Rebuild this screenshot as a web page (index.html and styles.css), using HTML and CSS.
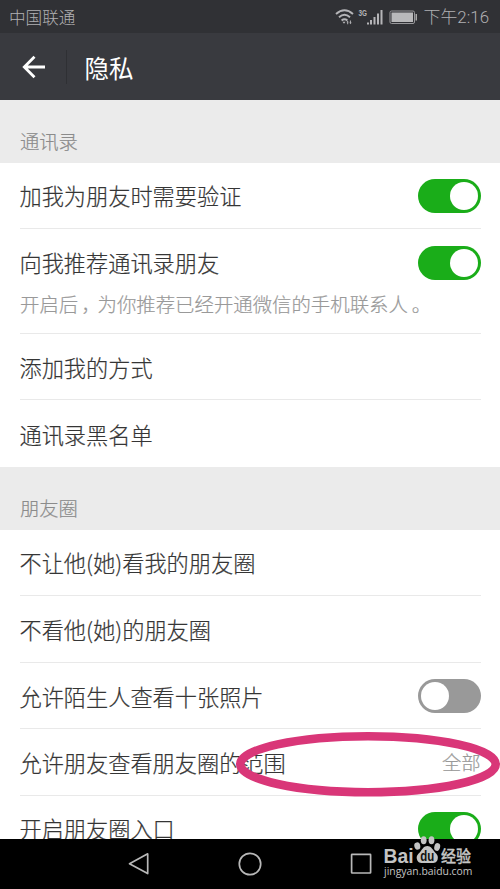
FILE: index.html
```html
<!DOCTYPE html>
<html lang="zh-CN">
<head>
<meta charset="utf-8">
<title>隐私</title>
<link rel="stylesheet" href="styles.css">
</head>
<body>
<div class="phone">
  <div class="status">
    <span>中国联通</span>
    <div class="status-right">
      <svg class="signals" width="86" height="20" viewBox="0 0 86 20">
        <g fill="none" stroke="#b5b5b8" stroke-width="1.900">
          <path d="M2 7Q10.500-.5 19 7M5 10.300Q10.500 5.400 16 10.300M7.600 13.400Q10.500 11 13.400 13.400"/>
        </g>
        <path d="M8.500 14.700h3l-1.500 2.100zM13.600 13.700l-1.200 1.500h.8v2h1v-2h.6zM16.500 17.200l1.200-1.600h-.8v-2h-1v2h-.6z" fill="#b5b5b8"/>
        <text x="24.500" y="9" class="net" textLength="8.500" lengthAdjust="spacingAndGlyphs">3G</text>
        <path d="M33 15.500h2v2h-2zM36 13h2v4.500h-2zM39.500 10h2v7.500h-2zM43 6.500h2v11h-2zM46.500 3h2v14.500h-2z" fill="#b5b5b8"/>
        <rect x="56" y="4" width="24.500" height="12.500" rx="1.500" fill="none" stroke="#98989b"/>
        <rect x="57.500" y="5.500" width="21.500" height="9.500" fill="#b9b9bb"/>
        <path d="M81.500 7h1.500v6.500h-1.500z" fill="#aaa"/>
      </svg>
      <span class="clock">下午2:16</span>
    </div>
  </div>
  <header class="bar">
    <svg class="back" width="24" height="24" viewBox="0 0 24 24" fill="none" stroke="#fff" stroke-width="2.800"><path d="M23 12H2.500M12.500 1.800L2.300 12l10.200 10.200"/></svg>
    <h1>隐私</h1>
  </header>
  <main>
    <h2>通讯录</h2>
    <section>
      <div class="row"><span>加我为朋友时需要验证</span><i class="switch on"></i></div>
      <div class="row described"><span>向我推荐通讯录朋友</span><i class="switch on"></i>
        <p>开启后<span class="comma">，</span>为你推荐已经开通微信的手机联系人<span class="stop">。</span></p></div>
      <div class="row"><span>添加我的方式</span></div>
      <div class="row"><span>通讯录黑名单</span></div>
    </section>
    <h2>朋友圈</h2>
    <section>
      <div class="row"><span>不让他(她)看我的朋友圈</span></div>
      <div class="row"><span>不看他(她)的朋友圈</span></div>
      <div class="row"><span>允许陌生人查看十张照片</span><i class="switch"></i></div>
      <div class="row"><span>允许朋友查看朋友圈的范围</span><span class="value">全部</span></div>
      <div class="row"><span>开启朋友圈入口</span><i class="switch on"></i></div>
    </section>
  </main>
  <nav>
    <svg width="500" height="50" viewBox="0 0 500 50" fill="none" stroke="#b8b8b8" stroke-width="1.700" stroke-linejoin="round">
      <path d="M147.700 14.800v19.800L129.500 24.700z"/>
      <circle cx="250" cy="25" r="10.700"/>
      <rect x="351.600" y="15.300" width="19" height="18.700" rx=".5"/>
    </svg>
  </nav>
  <svg class="ring" width="266" height="68" viewBox="0 0 266 68"><ellipse cx="133" cy="34.200" rx="127.700" ry="28" fill="none" stroke="#d93678" stroke-width="8.600"/></svg>
  <svg class="brand" width="100" height="50" viewBox="0 0 100 50" fill="#c4c4c4">
    <text x="3.500" y="29" class="bai" textLength="30" lengthAdjust="spacingAndGlyphs">Bai</text>
    <ellipse cx="37.300" cy="12" rx="3" ry="3.700" transform="rotate(-12 37.300 12)"/>
    <ellipse cx="43.700" cy="6.200" rx="2.900" ry="4"/>
    <ellipse cx="51.500" cy="6.200" rx="2.900" ry="4"/>
    <ellipse cx="57.200" cy="13" rx="2.900" ry="3.900" transform="rotate(15 57.200 13)"/>
    <path d="M47.300 12c3.500 0 5 3 7 5.500s4.500 4 3.300 8c-1 3.800-4.500 3.800-10.300 3.500-5.800.3-9.300.3-10.300-3.500-1.200-4 1.500-5.500 3.500-8s3.300-5.500 6.800-5.500z"/>
    <text x="40.300" y="27.300" class="du" textLength="14" lengthAdjust="spacingAndGlyphs">du</text>
    <text x="61" y="28" class="jy" textLength="30" lengthAdjust="spacingAndGlyphs">经验</text>
    <text x="4" y="41" class="url" textLength="88.500" lengthAdjust="spacingAndGlyphs">jingyan.baidu.com</text>
  </svg>
</div>
</body>
</html>
```
FILE: styles.css
```css
* { box-sizing: border-box; margin: 0; padding: 0; }
body { font-family: "Noto Sans CJK SC", sans-serif; font-weight: 300; background: #fff; }
.phone { position: relative; width: 500px; height: 889px; overflow: hidden; display: flex; flex-direction: column; }
.status { height: 33px; flex: none; background: #303135; color: #b0b0b3; display: flex; justify-content: space-between; align-items: center; padding: 1px 11px 0 9px; font-size: 16.600px; line-height: 32px; }
.status-right { display: flex; align-items: center; gap: 4px; }
.signals { display: block; margin-top: -1px; }
.net { font: bold 9.500px "Liberation Sans", sans-serif; fill: #b5b5b8; }
.clock { font-family: Roboto, "Noto Sans CJK SC", sans-serif; font-weight: 300; font-size: 16.900px; }
.bar { height: 67px; flex: none; background: #393a3f; display: flex; align-items: center; padding-left: 22px; }
.back { flex: none; }
.bar h1 { margin-left: 20px; padding-left: 17.500px; height: 34px; border-left: 1px solid #2f3034; color: #fff; font-size: 24.500px; line-height: 35px; font-weight: 400; }
main { flex: 1; min-height: 0; overflow: hidden; -webkit-text-stroke: .2px; }
h2 { height: 62.600px; background: #ebebeb; color: #8b8b8b; font-size: 19.300px; font-weight: 300; line-height: 28px; padding: 27px 20px 0; }
section { background: #fff; padding: 0 19.500px 0 20px; }
.row { display: flex; flex-wrap: wrap; justify-content: space-between; align-items: center; height: 66.600px; border-bottom: 1px solid #e9e9e9; color: #353535; font-size: 22.200px; line-height: 32px; }
.row:last-child { border-bottom: 0; }
.row > span { margin-left: -.5px; }
section:last-child .row:last-child { height: 65px; }
.described { height: 104.600px; align-content: flex-start; padding-top: 17px; }
.described p { width: 100%; color: #999; font-size: 19.400px; line-height: 28px; margin-top: 12px; white-space: nowrap; }
.comma { margin: 0 -3px 0 3px; }
.stop { margin-left: 4px; }
.described .switch { margin: -1px 0; }
.value { color: #999; font-size: 19.300px; }
.switch { position: relative; top: .4px; width: 63px; height: 34px; border-radius: 17px; background: #999; padding: 3px; display: flex; }
.switch::before { content: ""; width: 28px; height: 28px; border-radius: 50%; background: #fff; }
.switch.on { background: #1aad19; justify-content: flex-end; }
nav { height: 50px; flex: none; background: #000; }
nav svg { display: block; }
.ring { position: absolute; left: 235px; top: 730px; }
.brand { position: absolute; left: 380px; top: 834px; }
.bai { font: bold 21px "Liberation Sans", sans-serif; }
.du { font: bold 15px "Liberation Sans", sans-serif; fill: #111; }
.jy { font: 500 15.500px "Noto Sans CJK SC", sans-serif; stroke: #c4c4c4; stroke-width: .3px; }
.url { font: 11px "Open Sans", sans-serif; }
```
